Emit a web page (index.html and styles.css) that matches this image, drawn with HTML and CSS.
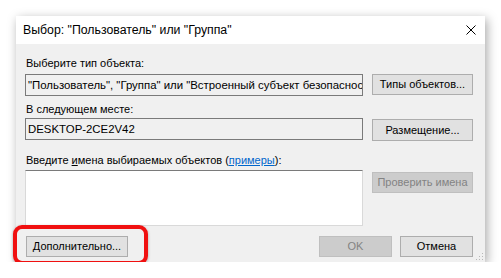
FILE: index.html
```html
<!DOCTYPE html>
<html lang="ru">
<head>
    <meta charset="UTF-8">
    <meta name="viewport" content="width=device-width, initial-scale=1.0">
    <title>Выбор: "Пользователь" или "Группа"</title>
    <link rel="stylesheet" href="styles.css">
</head>
<body>

    <div class="dialog">
        <div class="title-bar">
            <span class="title">Выбор: "Пользователь" или "Группа"</span>
            <span class="close-btn">
                <svg width="10" height="10" viewBox="0 0 10 10">
                    <path d="M0.5 0.5 L9.5 9.5 M9.5 0.5 L0.5 9.5" stroke="#000" stroke-width="1" fill="none"/>
                </svg>
            </span>
        </div>

        <div class="dialog-body">
            <div class="form-grid">
                <div class="field-label">Выберите тип объекта:</div>
                <div class="field-box readonly">"Пользователь", "Группа" или "Встроенный субъект безопасности"</div>
                <button class="win-btn">Типы объектов...</button>

                <div class="field-label second">В следующем месте:</div>
                <div class="field-box readonly place">DESKTOP-2CE2V42</div>
                <button class="win-btn place-btn">Размещение...</button>

                <div class="field-label third">Введите <u>и</u>мена выбираемых объектов (<a href="#" class="link">примеры</a>):</div>
                <div class="field-box names"></div>
                <button class="win-btn check-btn" disabled>Проверить имена</button>
            </div>

            <div class="footer">
                <button class="win-btn">Дополнительно...</button>
                <div class="footer-right">
                    <button class="win-btn" disabled>OK</button>
                    <button class="win-btn">Отмена</button>
                </div>
            </div>
        </div>

        <span class="grip"></span>
        <div class="highlight"></div>
    </div>

</body>
</html>
```

FILE: styles.css
```css
* {
    margin: 0;
    padding: 0;
    box-sizing: border-box;
    font-family: "Liberation Sans", Arial, sans-serif;
}

body {
    background-color: #ffffff;
    padding: 16px 0 0 16px;
    font-size: 11px;
    color: #000;
}

.dialog {
    position: relative;
    width: 469px;
    height: 246px;
    background: #f0f0f0;
    box-shadow: 2px 3px 10px rgba(0, 0, 0, 0.35);
}

.title-bar {
    display: flex;
    justify-content: space-between;
    align-items: center;
    height: 28px;
    background: #ffffff;
    padding: 0 9px 0 7px;
}

.title {
    font-size: 12.3px;
    line-height: 16px;
}

.close-btn {
    display: flex;
    align-items: center;
}

.dialog-body {
    padding: 11px 12px 0 9px;
}

.form-grid {
    display: grid;
    grid-template-columns: 338px 101px;
    column-gap: 9px;
    align-items: start;
}

.field-label {
    grid-column: 1 / 3;
    line-height: 16px;
    padding-left: 1px;
    margin-bottom: 3px;
}

.field-label.second {
    margin-top: 5px;
    margin-bottom: 1px;
}

.field-label.third {
    margin-top: 11px;
    margin-bottom: 2px;
}

.link {
    color: #0066cc;
}

.field-box {
    height: 22px;
    border: 1px solid #7a7a7a;
    padding: 0 0 0 2px;
    line-height: 20px;
    font-size: 11.4px;
    white-space: nowrap;
    overflow: hidden;
}

.field-box.readonly {
    background: #f0f0f0;
}

.field-box.names {
    height: 56px;
    background: #ffffff;
    border-color: #7a7a7a #d9d9d9 #d9d9d9 #d9d9d9;
}

.win-btn {
    height: 21px;
    background: #e1e1e1;
    border: 1px solid #adadad;
    font-size: 11px;
    line-height: 19px;
    color: #000;
    padding: 0;
    white-space: nowrap;
}

.win-btn:disabled {
    background: #cccccc;
    border-color: #bfbfbf;
    color: #838383;
}

.place-btn {
    margin-top: 1px;
    height: 22px;
}

.check-btn {
    margin-top: 2px;
}

.footer {
    display: flex;
    justify-content: space-between;
    margin-top: 10px;
    padding-left: 1px;
}

.footer .win-btn {
    width: 102px;
}

.footer-right {
    display: flex;
    gap: 8px;
}

.footer-right .win-btn {
    width: 73px;
}

.grip {
    position: absolute;
    right: 2px;
    bottom: 2px;
    width: 8px;
    height: 8px;
    background:
        radial-gradient(circle, #b8b8b8 1px, transparent 1px) 0 0 / 3px 3px;
    clip-path: polygon(100% 0, 100% 100%, 0 100%);
}

.highlight {
    position: absolute;
    left: -3px;
    top: 209px;
    width: 135px;
    height: 40px;
    border: 4px solid #f01010;
    border-radius: 9px;
    box-shadow: 0 1px 3px rgba(0, 0, 0, 0.3);
}
```
